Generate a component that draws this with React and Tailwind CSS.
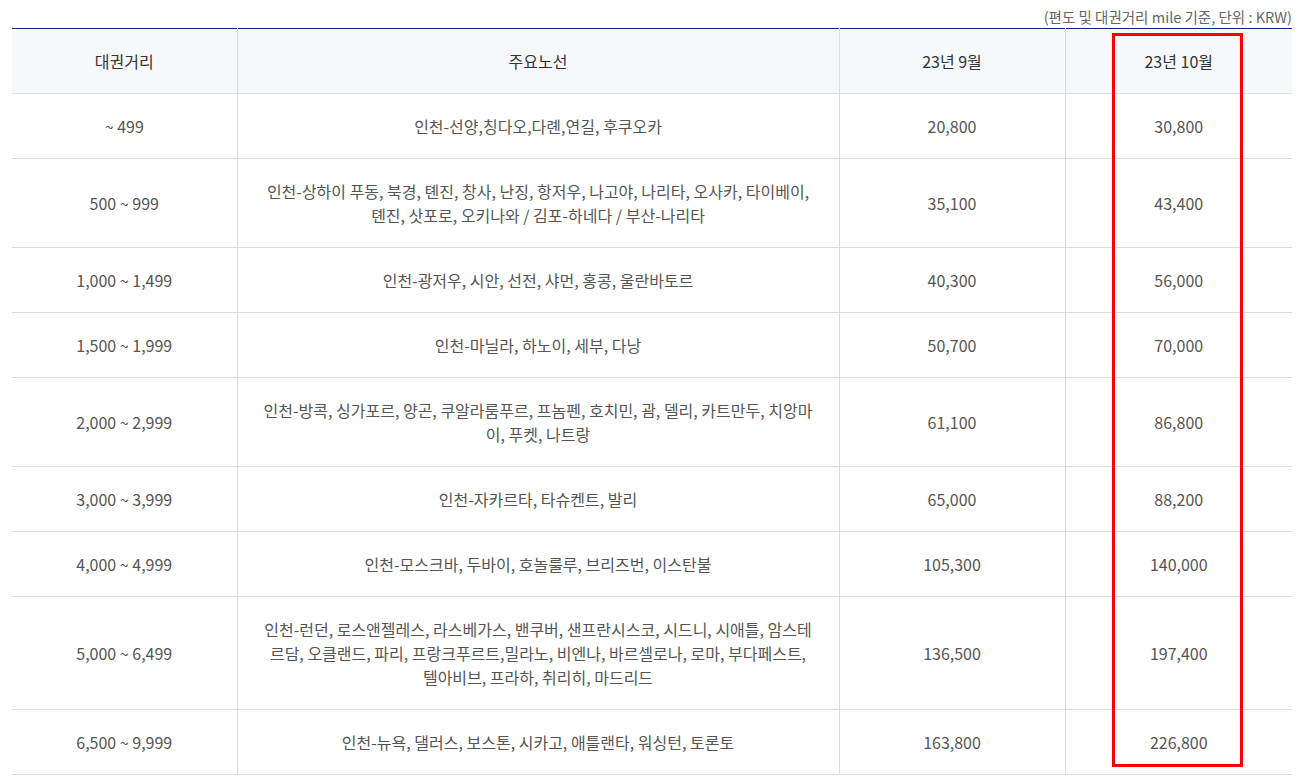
import React from "react";

const rows = [
  ["~ 499", "인천-선양,칭다오,다롄,연길, 후쿠오카", "20,800", "30,800"],
  [
    "500 ~ 999",
    "인천-상하이 푸동, 북경, 톈진, 창사, 난징, 항저우, 나고야, 나리타, 오사카, 타이베이, 톈진, 삿포로, 오키나와 / 김포-하네다 / 부산-나리타",
    "35,100",
    "43,400",
  ],
  ["1,000 ~ 1,499", "인천-광저우, 시안, 선전, 샤먼, 홍콩, 울란바토르", "40,300", "56,000"],
  ["1,500 ~ 1,999", "인천-마닐라, 하노이, 세부, 다낭", "50,700", "70,000"],
  [
    "2,000 ~ 2,999",
    "인천-방콕, 싱가포르, 양곤, 쿠알라룸푸르, 프놈펜, 호치민, 괌, 델리, 카트만두, 치앙마이, 푸켓, 나트랑",
    "61,100",
    "86,800",
  ],
  ["3,000 ~ 3,999", "인천-자카르타, 타슈켄트, 발리", "65,000", "88,200"],
  ["4,000 ~ 4,999", "인천-모스크바, 두바이, 호놀룰루, 브리즈번, 이스탄불", "105,300", "140,000"],
  [
    "5,000 ~ 6,499",
    "인천-런던, 로스앤젤레스, 라스베가스, 밴쿠버, 샌프란시스코, 시드니, 시애틀, 암스테르담, 오클랜드, 파리, 프랑크푸르트,밀라노, 비엔나, 바르셀로나, 로마, 부다페스트, 텔아비브, 프라하, 취리히, 마드리드",
    "136,500",
    "197,400",
  ],
  ["6,500 ~ 9,999", "인천-뉴욕, 댈러스, 보스톤, 시카고, 애틀랜타, 워싱턴, 토론토", "163,800", "226,800"],
];

export default function App() {
  return (
    <div
      className="bg-white min-h-screen pl-[12px] pr-[10px] pt-[7px]"
      style={{ fontFamily: '"Noto Sans CJK KR", "Noto Sans", sans-serif' }}
    >
      {/* unit caption */}
      <p className="text-right text-[14.5px] leading-[19px] text-[#666] mb-[2px]">
        (편도 및 대권거리 mile 기준, 단위 : KRW)
      </p>

      <div className="relative">
        <table className="w-full border-collapse table-fixed border-t border-[#0b2a7a] text-[16px] leading-[24px] text-[#555]">
          <colgroup>
            <col className="w-[225px]" />
            <col className="w-[602px]" />
            <col className="w-[226px]" />
            <col />
          </colgroup>
          <thead>
            <tr className="bg-[#f7f8fc] text-[#333]">
              <th className="font-normal py-[20px] border-b border-[#ddd]">대권거리</th>
              <th className="font-normal py-[20px] border-b border-l border-[#ddd]">주요노선</th>
              <th className="font-normal py-[20px] border-b border-l border-[#ddd]">23년 9월</th>
              <th className="font-normal py-[20px] border-b border-l border-[#ddd]">23년 10월</th>
            </tr>
          </thead>
          <tbody>
            {rows.map((r) => (
              <tr key={r[0]}>
                <td className="text-center py-[20px] border-b border-[#ddd]">{r[0]}</td>
                <td className="text-center py-[20px] px-[24px] border-b border-l border-[#ddd]">{r[1]}</td>
                <td className="text-center py-[20px] border-b border-l border-[#ddd]">{r[2]}</td>
                <td className="text-center py-[20px] border-b border-l border-[#ddd]">{r[3]}</td>
              </tr>
            ))}
          </tbody>
        </table>

        {/* red highlight box over the latest month column */}
        <div className="absolute top-[5px] bottom-[8px] left-[1100px] w-[131px] border-[3px] border-[#f00] pointer-events-none" />
      </div>
    </div>
  );
}
